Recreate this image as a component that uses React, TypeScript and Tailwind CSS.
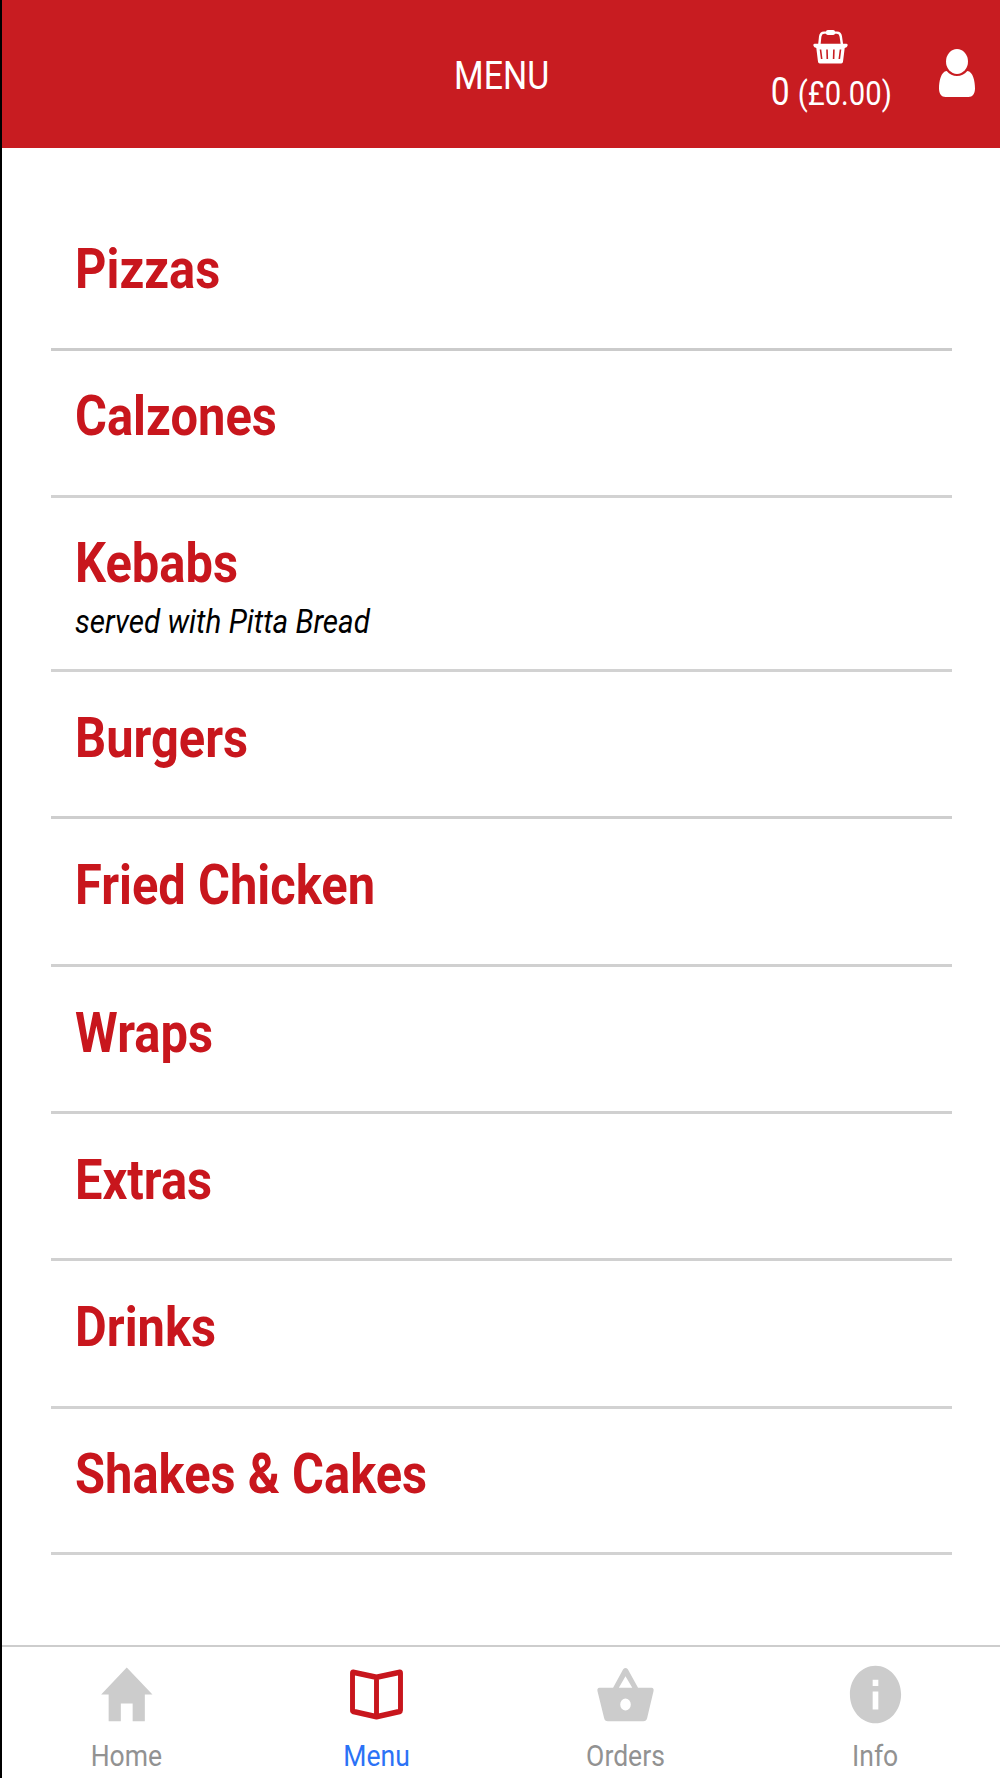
import type { ReactNode } from "react";

interface ICategory {
  name: string;
  note?: string;
  row: string;
}

const CATEGORIES: ICategory[] = [
  { name: "Pizzas", row: "h-[148px] pt-[33px] border-[#cbcbcb]" },
  { name: "Calzones", row: "h-[147px] pt-8 border-[#d2d2d2]" },
  { name: "Kebabs", note: "served with Pitta Bread", row: "h-[174px] pt-8 border-[#d2d2d2]" },
  { name: "Burgers", row: "h-[147px] pt-[33px] border-[#cecece]" },
  { name: "Fried Chicken", row: "h-[148px] pt-[33px] border-[#d0d0d0]" },
  { name: "Wraps", row: "h-[147px] pt-[33px] border-[#d0d0d0]" },
  { name: "Extras", row: "h-[147px] pt-[33px] border-[#d0d0d0]" },
  { name: "Drinks", row: "h-[148px] pt-[33px] border-[#d2d2d2]" },
  { name: "Shakes & Cakes", row: "h-[146px] pt-8 border-[#d2d2d2]" },
];

const BasketIcon = () => (
  <svg className="h-[34px] w-[35px]" viewBox="0 0 35 34" fill="none">
    <path
      d="M6.3 15 7.2 6.5Q7.7 2.7 11 2.6H24Q27.3 2.7 27.8 6.5L29 15"
      stroke="#fff"
      strokeWidth="2.4"
    />
    <rect x="13" y="0" width="9" height="5" rx="1.8" fill="#fff" />
    <path
      d="M1.5 13.7H33.5Q35 13.9 34.6 15.7Q34 17.8 31.7 18L30 31.8Q29.8 33.4 28.2 33.4H6.8Q5.2 33.4 5 31.8L3.3 18Q1 17.8.4 15.7Q0 13.9 1.5 13.7Z"
      fill="#fff"
    />
    <path
      d="M7.5 19.5 8.7 29M14 19.5 14.3 29M20.9 19.5 20.6 29M27.5 19.5 26.3 29"
      stroke="#c81c21"
      strokeWidth="1.6"
    />
  </svg>
);

const UserIcon = () => (
  <svg className="h-12 w-9" viewBox="0 0 36 48" fill="#fff">
    <ellipse cx="18" cy="12.5" rx="11" ry="12.5" />
    <path d="M7.7 22C10.5 25.4 14 27 18 27S25.5 25.4 28.3 22C34 22.5 36 32 36 39.5C36 44.5 33.5 48 29.5 48H6.5C2.5 48 0 44.5 0 39.5C0 32 2 22.5 7.7 22Z" />
  </svg>
);

const TabIcon = ({ children }: { children: ReactNode }) => (
  <svg
    className="h-[71px] w-[63px]"
    viewBox="0 0 512 512"
    preserveAspectRatio="none"
    fill="#ccc"
  >
    {children}
  </svg>
);

const TABS = [
  {
    label: "Home",
    color: "text-[#929292]",
    icon: <path d="M210 448V320h96v128h99V256H467L258 62 50 256h61v192z" />,
  },
  {
    label: "Menu",
    color: "text-[#2b72f6]",
    icon: (
      <path
        d="M256 131 66 95Q61 95 61 101V370Q61 377 68 379L256 416 444 379Q451 377 451 370V101Q451 95 446 95ZV412"
        fill="none"
        stroke="#c8161d"
        strokeWidth="40"
        strokeLinejoin="round"
      />
    ),
  },
  {
    label: "Orders",
    color: "text-[#929292]",
    icon: (
      <path
        fillRule="evenodd"
        d="M155 208 237 74Q256 54 275 74L358 208H468Q488 210 484 230L432 425Q425 448 402 448H112Q88 448 82 425L28 230Q24 210 44 208ZM202 208H311L256 124ZM256 285A43 43 0 1 0 256 371A43 43 0 1 0 256 285Z"
      />
    ),
  },
  {
    label: "Info",
    color: "text-[#929292]",
    icon: (
      <path d="M256 48C141.2 48 48 141.2 48 256s93.2 208 208 208 208-93.2 208-208S370.8 48 256 48zm23 316h-46V234h46v130zm0-170h-46v-44h46v44z" />
    ),
  },
];

const Header = () => (
  <header className="grid h-[148px] grid-cols-3 bg-[#c81c21] text-white">
    <div />
    <h1 className="mt-[53px] pl-0.5 text-center text-[39px] leading-[46px]">
      <span className="inline-block scale-x-[0.87]">MENU</span>
    </h1>
    <div className="flex justify-end">
      <div className="mt-[30px] flex w-[120px] flex-col items-center">
        <BasketIcon />
        <div className="mt-[5px] flex origin-center scale-x-[0.885] items-baseline gap-[9px] whitespace-nowrap leading-[46px]">
          <span className="text-[38px]">0</span>
          <span className="text-[33px]">(£0.00)</span>
        </div>
      </div>
      <div className="mt-[49px] mr-[25px] ml-[48px]">
        <UserIcon />
      </div>
    </div>
  </header>
);

const CategoryRow = ({ name, note, row }: ICategory) => (
  <li className={`${row} border-b-3 pl-6`}>
    <h2 className="origin-left scale-x-[0.888] text-[55px] leading-[66px] font-bold text-[#c8161d]">
      {name}
    </h2>
    {note && (
      <p className="mt-[6px] origin-left scale-x-[0.898] text-[33px] leading-10 text-black italic">
        {note}
      </p>
    )}
  </li>
);

const TabBar = () => (
  <nav className="grid h-[133px] grid-cols-4 border-t-2 border-[#cdcdcd]">
    {TABS.map(({ label, color, icon }) => (
      <div key={label} className="flex flex-col items-center pt-3">
        <TabIcon>{icon}</TabIcon>
        <span className={`mt-[7px] scale-x-[0.885] text-[30px] leading-[38px] ${color}`}>
          {label}
        </span>
      </div>
    ))}
  </nav>
);

export default function App() {
  return (
    <div className="flex h-[1778px] flex-col overflow-hidden border-l-2 border-black bg-white font-['Roboto','Liberation_Sans',sans-serif]">
      <Header />
      <ul className="mt-[55px] mr-12 ml-[49px] flex-1">
        {CATEGORIES.map((category) => (
          <CategoryRow key={category.name} {...category} />
        ))}
      </ul>
      <TabBar />
    </div>
  );
}
